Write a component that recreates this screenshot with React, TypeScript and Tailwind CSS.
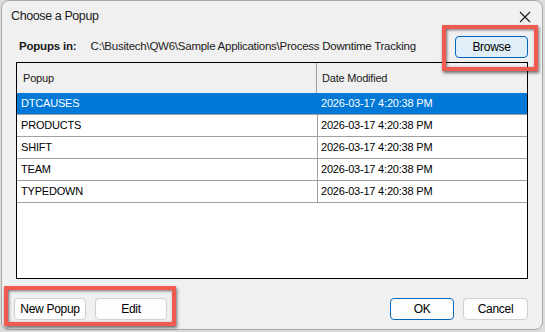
const rows = ["DTCAUSES", "PRODUCTS", "SHIFT", "TEAM", "TYPEDOWN"];
const stamp = "2026-03-17 4:20:38 PM";

function WinButton({ label, variant = "plain", className = "" }: { label: string; variant?: "plain" | "default" | "focus"; className?: string }) {
  const look =
    variant === "focus"
      ? "bg-[#e0eef9] border-[#0067c0]"
      : variant === "default"
      ? "bg-[#fdfdfd] border-[#0067c0]"
      : "bg-[#fdfdfd] border-[#d0d0d0]";
  return (
    <button
      className={`h-[22px] rounded-[4px] border text-[12px] tracking-[-0.3px] text-black flex items-center justify-center ${look} ${className}`}
    >
      {label}
    </button>
  );
}

export default function App() {
  return (
    <div
      className="relative w-[545px] h-[332px] bg-[#dcdcdc] overflow-hidden"
      style={{ fontFamily: '"Liberation Sans", Arial, sans-serif' }}
    >
      <div className="ml-[1px] w-[542px] h-[330px] rounded-[8px] border border-[#a8a8a8] bg-[#f0f0f0] flex flex-col">
        {/* title bar */}
        <div className="h-[31px] flex items-center justify-between pl-[9px] pr-[9px]">
          <span className="text-[12.5px] tracking-[-0.4px] text-[#1a1a1a]">Choose a Popup</span>
          <svg width="12" height="12" viewBox="0 0 12 12" className="mr-[2px]">
            <path d="M1 1 L11 11 M11 1 L1 11" stroke="#1a1a1a" strokeWidth="1.1" fill="none" />
          </svg>
        </div>

        <div className="flex flex-col px-[14px] flex-1">
          {/* folder row */}
          <div className="h-[22px] mt-[4px] flex items-center">
            <span className="ml-[3px] text-[11.5px] font-bold text-[#1a1a1a] tracking-[-0.2px]">Popups in:</span>
            <span className="ml-[14px] text-[11.5px] tracking-[-0.25px] text-[#1a1a1a]">
              C:\Busitech\QW6\Sample Applications\Process Downtime Tracking
            </span>
            <WinButton label="Browse" variant="focus" className="ml-auto w-[73px]" />
          </div>

          {/* list */}
          <div className="mt-[4px] h-[217px] border border-black bg-white flex flex-col text-[11px] tracking-[-0.2px]">
            <div className="h-[30px] flex bg-[#f0f0f0] text-[#1a1a1a]">
              <div className="w-[300px] border-r border-[#a0a0a0] pl-[6px] flex items-center">Popup</div>
              <div className="flex-1 pl-[5px] flex items-center">Date Modified</div>
            </div>
            {rows.map((name, i) => (
              <div
                key={name}
                className={`h-[22px] flex border-b border-[#a0a0a0] ${i === 0 ? "bg-[#0078d7] text-white" : "bg-white text-black"}`}
              >
                <div className={`w-[301px] pl-[4px] flex items-center ${i === 0 ? "" : "border-r border-[#a0a0a0]"}`}>{name}</div>
                <div className="flex-1 pl-[3px] flex items-center">{stamp}</div>
              </div>
            ))}
          </div>

          {/* buttons */}
          <div className="mt-[19px] flex items-center">
            <WinButton label="New Popup" className="w-[72px] -ml-[2px]" />
            <WinButton label="Edit" className="w-[72px] ml-[9px]" />
            <WinButton label="OK" variant="default" className="w-[64px] ml-auto" />
            <WinButton label="Cancel" className="w-[65px] ml-[9px]" />
          </div>
        </div>
      </div>

      {/* annotation boxes */}
      <div className="absolute left-[442px] top-[25px] w-[96px] h-[46px] border-[4px] border-[#f05a50] shadow-[1px_2px_3px_rgba(0,0,0,0.55),inset_1px_1px_3px_rgba(0,0,0,0.55)]" />
      <div className="absolute left-[4px] top-[286px] w-[172px] h-[40px] border-[4px] border-[#f05a50] shadow-[1px_2px_3px_rgba(0,0,0,0.55),inset_1px_1px_3px_rgba(0,0,0,0.55)]" />
    </div>
  );
}
